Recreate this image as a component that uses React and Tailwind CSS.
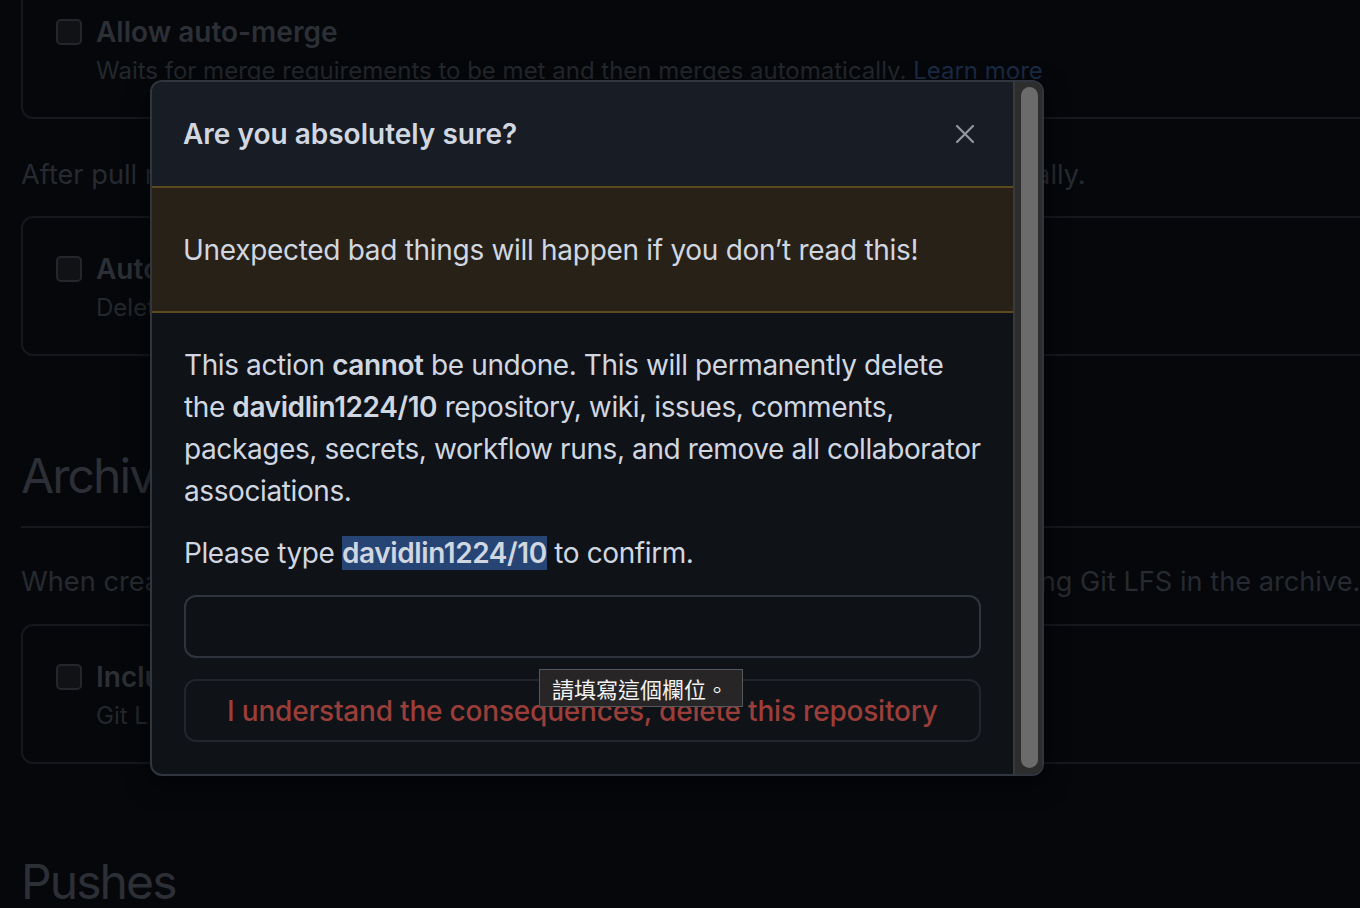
import React from 'react';

const Checkbox = () => (
    <div className="w-[26px] h-[26px] rounded-[5px] border-2 border-[#23262b] bg-[#101215] shrink-0" />
);

const OptionBox = ({ title, desc, children, className = '' }) => (
    <div className={`h-[140px] rounded-[12px] border-2 border-[#15181d] pl-[33px] pt-[38px] ${className}`}>
        <div className="flex gap-[14px]">
            <Checkbox />
            <div className="-mt-[8px]">
                <div className="text-[28px] leading-[42px] font-semibold text-[#2c2f35] whitespace-nowrap">{title}</div>
                <div className="text-[24px] leading-[36px] text-[#24272d] whitespace-nowrap">{desc}{children}</div>
            </div>
        </div>
    </div>
);

const App = () => {
    return (
        <div
            className="relative w-[1360px] h-[908px] overflow-hidden bg-[#05070b]"
            style={{ fontFamily: 'Inter, "Noto Sans", sans-serif' }}
        >
            {/* dimmed settings page behind the dialog */}
            <div className="w-[1500px] pl-[21px]">
                <OptionBox className="-mt-[21px]" title="Allow auto-merge" desc="Waits for merge requirements to be met and then merges automatically. ">
                    <span className="text-[#1a2b45]">Learn more</span>
                </OptionBox>
                <p className="mt-[38px] text-[27.2px] leading-[36px] text-[#272a30] whitespace-nowrap">
                    After pull requests are merged, you can have head branches deleted automatically.
                </p>
                <OptionBox
                    className="mt-[23px]"
                    title="Automatically delete head branches"
                    desc="Deleted branches will still be able to be restored."
                />
                <div className="mt-[88px] border-b-2 border-[#15181d] pb-[18px]">
                    <h2 className="text-[48px] leading-[64px] font-normal tracking-[-0.04em] text-[#2c2f35]">Archives</h2>
                </div>
                <p className="mt-[36px] text-[27.2px] leading-[36px] text-[#272a30] whitespace-nowrap">
                    When creating source code archives, you can choose to include files stored using Git LFS in the archive.
                </p>
                <OptionBox
                    className="mt-[24px]"
                    title="Include Git LFS objects in archives"
                    desc="Git LFS usage in archives is billed at the same rate as usage with the client."
                />
                <h2 className="mt-[86px] text-[48px] leading-[64px] font-normal tracking-[-0.04em] text-[#2c2f35]">Pushes</h2>
            </div>

            {/* dialog */}
            <div className="absolute left-[150px] top-[80px] w-[894px] h-[696px] flex rounded-[12px] border-2 border-[#31363e] bg-[#0f1217] overflow-hidden shadow-[0_8px_24px_rgba(0,0,0,0.6)]">
                <div className="flex-1 flex flex-col">
                    <div className="h-[106px] shrink-0 bg-[#181c24] border-b-2 border-[#5b4a1f] flex items-center justify-between pl-[31px] pr-[38px]">
                        <h3 className="text-[28px] font-semibold text-[#d1d7e0]">Are you absolutely sure?</h3>
                        <svg width="20" height="20" viewBox="0 0 20 20" fill="none" stroke="#9198a1" strokeWidth="2.2" strokeLinecap="round">
                            <path d="M2 2L18 18M18 2L2 18" />
                        </svg>
                    </div>
                    <div className="h-[125px] shrink-0 bg-[#272118] border-b-2 border-[#5b4a1f] flex items-center pl-[31px]">
                        <p className="text-[28px] tracking-[-0.3px] text-[#d1d7e0]">Unexpected bad things will happen if you don’t read this!</p>
                    </div>
                    <div className="flex-1 px-[32px] pt-[31px] text-[28px] leading-[42px] tracking-[-0.4px] text-[#d1d7e0]">
                        <p className="whitespace-nowrap">
                            This action <b className="font-semibold">cannot</b> be undone. This will permanently delete<br />
                            the <b className="font-semibold">davidlin1224/10</b> repository, wiki, issues, comments,<br />
                            packages, secrets, workflow runs, and remove all collaborator<br />
                            associations.
                        </p>
                        <p className="mt-[20px]">
                            Please type <b className="font-semibold bg-[#274574]">davidlin1224/10</b> to confirm.
                        </p>
                        <div className="mt-[21px] h-[63px] rounded-[12px] border-2 border-[#30353d] bg-[#0e1116]" />
                        <div className="relative mt-[21px] h-[63px] rounded-[12px] border-2 border-[#22262c] flex items-center justify-center">
                            <span className="text-[28px] font-medium tracking-[-0.2px] text-[#9b3e39]">I understand the consequences, delete this repository</span>
                            <div
                                className="absolute left-[353px] -top-[12px] h-[38px] pl-[12px] pr-[14px] flex items-center bg-[#272525] border border-[#55585c] text-[22px] tracking-normal text-[#f2f2f2] whitespace-nowrap"
                                style={{ fontFamily: '"Noto Sans CJK TC", sans-serif' }}
                            >
                                請填寫這個欄位。
                            </div>
                        </div>
                    </div>
                </div>
                <div className="w-[30px] shrink-0 bg-[#2d2d2d] border-l-2 border-[#3a3a3a] pt-[5px] pb-[6px] pl-[6px] pr-[5px]">
                    <div className="h-full rounded-full bg-[#6b6b6b]" />
                </div>
            </div>
        </div>
    );
};

export default App;
